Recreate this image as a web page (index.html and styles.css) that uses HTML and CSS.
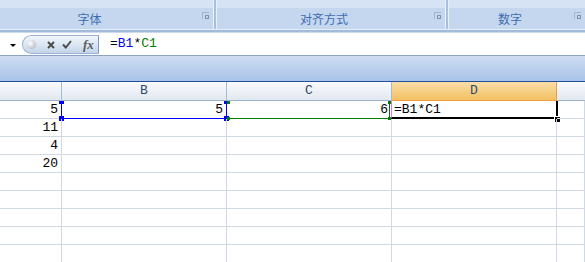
FILE: index.html
```html
<!DOCTYPE html>
<html>
<head>
    <title>Excel</title>
    <link rel="stylesheet" href="styles.css">
</head>
<body>
    <div class="ribbon">
        <div class="group g-font">
            <div class="group-top"></div>
            <div class="group-label">字体
                <svg class="launcher" width="8" height="8" viewBox="0 0 8 8">
                    <path d="M0.5 7 V0.5 H7" fill="none" stroke="#a3b4cb"/>
                    <rect x="3" y="3" width="4" height="4" fill="#8092ab"/>
                    <rect x="4" y="4" width="2" height="2" fill="#c9d4e3"/>
                </svg>
            </div>
        </div>
        <div class="sep"></div>
        <div class="group g-align">
            <div class="group-top"></div>
            <div class="group-label">对齐方式
                <svg class="launcher" width="8" height="8" viewBox="0 0 8 8">
                    <path d="M0.5 7 V0.5 H7" fill="none" stroke="#a3b4cb"/>
                    <rect x="3" y="3" width="4" height="4" fill="#8092ab"/>
                    <rect x="4" y="4" width="2" height="2" fill="#c9d4e3"/>
                </svg>
            </div>
        </div>
        <div class="sep"></div>
        <div class="group g-num">
            <div class="group-top"></div>
            <div class="group-label">数字
                <svg class="launcher" width="8" height="8" viewBox="0 0 8 8">
                    <path d="M0.5 7 V0.5 H7" fill="none" stroke="#a3b4cb"/>
                    <rect x="3" y="3" width="4" height="4" fill="#8092ab"/>
                    <rect x="4" y="4" width="2" height="2" fill="#c9d4e3"/>
                </svg>
            </div>
        </div>
    </div>
    <div class="ribbon-edge"></div>

    <div class="formula-bar">
        <div class="name-box"><span class="drop-arrow"></span></div>
        <div class="pill">
            <span class="dots"></span>
            <svg class="btn-x" width="8" height="8" viewBox="0 0 8 8">
                <path d="M1 1 L7 7 M7 1 L1 7" stroke="#4a4a4a" stroke-width="1.9"/>
            </svg>
            <svg class="btn-ok" width="10" height="9" viewBox="0 0 10 9">
                <path d="M1 4.5 L3.8 7.5 L9 1" fill="none" stroke="#4a4a4a" stroke-width="1.9"/>
            </svg>
            <span class="fx">fx</span>
        </div>
        <div class="formula">=<span class="ref-b">B1</span>*<span class="ref-c">C1</span></div>
    </div>
    <div class="band"></div>

    <div class="sheet">
        <div class="col-head"></div>
        <div class="col-head">B</div>
        <div class="col-head">C</div>
        <div class="col-head active">D</div>
        <div class="col-head last"></div>

        <div class="cell">5</div>
        <div class="cell">5
            <div class="range blue">
                <span class="h tl"></span><span class="h tr"></span>
                <span class="h bl"></span><span class="h br"></span>
            </div>
        </div>
        <div class="cell">6
            <div class="range green">
                <span class="h tl"></span><span class="h tr"></span>
                <span class="h bl"></span><span class="h br"></span>
            </div>
        </div>
        <div class="cell edit">=B1*C1
            <div class="range current"><span class="fill"></span></div>
        </div>
        <div class="cell"></div>

        <div class="cell">11</div><div class="cell"></div><div class="cell"></div><div class="cell"></div><div class="cell"></div>
        <div class="cell">4</div><div class="cell"></div><div class="cell"></div><div class="cell"></div><div class="cell"></div>
        <div class="cell">20</div><div class="cell"></div><div class="cell"></div><div class="cell"></div><div class="cell"></div>
        <div class="cell"></div><div class="cell"></div><div class="cell"></div><div class="cell"></div><div class="cell"></div>
        <div class="cell"></div><div class="cell"></div><div class="cell"></div><div class="cell"></div><div class="cell"></div>
        <div class="cell"></div><div class="cell"></div><div class="cell"></div><div class="cell"></div><div class="cell"></div>
        <div class="cell"></div><div class="cell"></div><div class="cell"></div><div class="cell"></div><div class="cell"></div>
        <div class="cell"></div><div class="cell"></div><div class="cell"></div><div class="cell"></div><div class="cell"></div>
    </div>
</body>
</html>
```

FILE: styles.css
```css
body {
    margin: 0;
    width: 585px;
    height: 262px;
    overflow: hidden;
    background: #ffffff;
    font-family: "Liberation Mono", monospace;
}

/* ribbon */
.ribbon {
    display: flex;
    height: 29px;
    background: #c4d7ef;
}

.group {
    display: flex;
    flex-direction: column;
    flex-shrink: 0;
}

.g-font {
    width: 233px;
    margin-left: -20px;
}

.g-align {
    width: 228px;
}

.g-num {
    flex: 1;
}

.group-top {
    height: 9px;
    background: #d5e3f5;
}

.group-label {
    position: relative;
    flex: 1;
    padding-right: 14px;
    padding-top: 1px;
    text-align: center;
    font-family: "Noto Sans CJK SC", sans-serif;
    font-size: 12px;
    line-height: 20px;
    color: #3e6cb0;
}

.launcher {
    position: absolute;
    right: 3px;
    top: 4px;
}

.sep {
    width: 4px;
    flex-shrink: 0;
    background: linear-gradient(to right, #eaf1fb 0 1px, #a8c0e0 1px 3px, #e8f0fa 3px);
}

.ribbon-edge {
    height: 4px;
    background: linear-gradient(#e6eef9 0 1px, #a2bbdd 1px 3px, #c9d9ee 3px);
}

/* formula bar */
.formula-bar {
    display: flex;
    height: 22px;
    background: #ffffff;
    border-bottom: 1px solid #8aa4c8;
}

.name-box {
    width: 22px;
    display: flex;
    align-items: center;
}

.drop-arrow {
    margin-left: 10px;
    margin-top: 2px;
    border-top: 3px solid #000000;
    border-left: 3px solid transparent;
    border-right: 3px solid transparent;
}

.pill {
    display: flex;
    align-items: center;
    box-sizing: border-box;
    width: 77px;
    height: 19px;
    margin-top: 2px;
    border: 1px solid #9fb4d2;
    border-right-color: #7f98bd;
    border-radius: 10px 0 0 10px;
    background: linear-gradient(#f2f6fb, #d9e4f3 55%, #c3d4eb);
}

.dots {
    width: 9px;
    height: 9px;
    margin-left: 4px;
    border-radius: 50%;
    background: radial-gradient(circle at 35% 35%, #ffffff, #c9cdd3 60%, #9ea4ad);
}

.btn-x {
    margin-left: 11px;
}

.btn-ok {
    margin-left: 7px;
}

.fx {
    margin-left: 11px;
    font-family: "Liberation Serif", serif;
    font-style: italic;
    font-weight: bold;
    font-size: 13px;
    color: #5a5a5a;
}

.formula {
    padding-left: 11px;
    font-size: 13px;
    line-height: 22px;
    color: #000000;
}

.ref-b {
    color: #0000ff;
}

.ref-c {
    color: #008000;
}

.band {
    height: 25px;
    background: linear-gradient(#cddcf1, #a9c4e8);
    border-bottom: 1px solid #1f4e9c;
}

/* sheet */
.sheet {
    display: grid;
    grid-template-columns: 62px 165px 165px 165px 1fr;
    grid-template-rows: 19px;
    grid-auto-rows: 18px;
}

.col-head {
    box-sizing: border-box;
    border-right: 1px solid #a7bbd2;
    border-bottom: 1px solid #9eb6ce;
    background: linear-gradient(#f9fafc, #e2e8f1);
    text-align: center;
    font-size: 13px;
    line-height: 18px;
    color: #2b4a6b;
}

.col-head.active {
    border-right-color: #f29a3c;
    border-bottom-color: #f29a3c;
    background: linear-gradient(#f9dea8, #f2c062);
}

.col-head.last {
    border-right: none;
}

.cell {
    position: relative;
    box-sizing: border-box;
    border-right: 1px solid #d0d7e5;
    border-bottom: 1px solid #d0d7e5;
    padding-right: 3px;
    text-align: right;
    font-size: 13px;
    line-height: 17px;
    color: #000000;
}

.cell.edit {
    text-align: left;
    padding-left: 2px;
}

/* reference ranges and active cell */
.range {
    position: absolute;
    top: 0;
}

.range.blue {
    left: -1px;
    right: -1px;
    bottom: -1px;
    border: 1px solid #0000ff;
    border-top: none;
}

.range.green {
    left: 0;
    right: 1px;
    bottom: -1px;
    border-right: 1px solid #008000;
    border-bottom: 1px solid #008000;
}

.range.current {
    left: -1px;
    right: -2px;
    bottom: -1px;
    border-left: 1px solid #ff66ff;
    border-right: 2px solid #000000;
    border-bottom: 2px solid #000000;
}

.h {
    position: absolute;
}

.blue .h {
    width: 5px;
    height: 5px;
    background: #0000ff;
}

.blue .tl, .blue .tr {
    top: 0;
    height: 3px;
}

.blue .tl, .blue .bl {
    left: -3px;
}

.blue .tr, .blue .br {
    right: -3px;
}

.blue .bl, .blue .br {
    bottom: -3px;
}

.green .h {
    width: 3px;
    height: 3px;
    background: #008000;
}

.green .tl, .green .tr {
    top: 0;
}

.green .tl, .green .bl {
    left: 0;
}

.green .tr, .green .br {
    right: -2px;
}

.green .bl, .green .br {
    bottom: -2px;
}

.fill {
    position: absolute;
    right: -4px;
    bottom: -5px;
    width: 5px;
    height: 5px;
    background: #000000;
    box-shadow: 0 0 0 1px #ffffff;
}
```
